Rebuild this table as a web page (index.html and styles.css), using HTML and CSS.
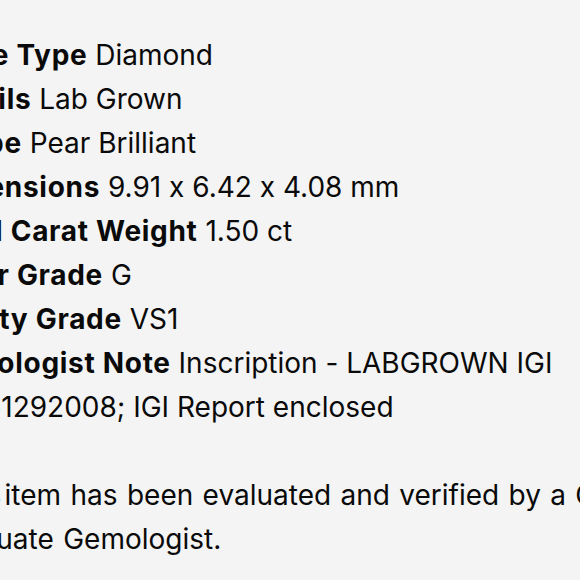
FILE: index.html
```html
<!DOCTYPE html>
<html>
<head>
<meta charset="utf-8">
<link rel="stylesheet" href="styles.css">
</head>
<body>
<div class="page">
  <div class="specs">
    <div class="row first"><b>Stone Type</b> Diamond</div>
    <div class="row"><b>Details</b> Lab Grown</div>
    <div class="row"><b>Shape</b> Pear Brilliant</div>
    <div class="row"><b>Dimensions</b> 9.91 x 6.42 x 4.08 mm</div>
    <div class="row"><b>Total Carat Weight</b> 1.50 ct</div>
    <div class="row"><b>Color Grade</b> G</div>
    <div class="row"><b>Clarity Grade</b> VS1</div>
    <div class="row"><b>Gemologist Note</b> Inscription - LABGROWN IGI</div>
    <div class="row cont">LG61292008; IGI Report enclosed</div>
  </div>
  <p class="note"><span class="lead">This</span> item has been evaluated and verified by a GIA<br>Graduate Gemologist.</p>
</div>
</body>
</html>
```
FILE: styles.css
```css
html, body {
  margin: 0;
  padding: 0;
  background: #f4f4f4;
}
body {
  width: 580px;
  height: 580px;
  overflow: hidden;
}
.page {
  padding-top: 33px;
  margin-left: -68px;
  font-family: Inter, "Noto Sans", sans-serif;
  font-size: 28px;
  line-height: 44px;
  color: #0a0a0a;
  white-space: nowrap;
  font-feature-settings: "calt" 0;
}
.specs b {
  font-weight: 700;
  letter-spacing: 0.7px;
}
.first {
  margin-left: -6px;
}
.cont {
  padding-left: 16px;
}
.note {
  margin: 44px 0 0 0;
  text-indent: 13px;
  word-spacing: 1.5px;
}
.lead {
  margin-right: -6px;
}
```
